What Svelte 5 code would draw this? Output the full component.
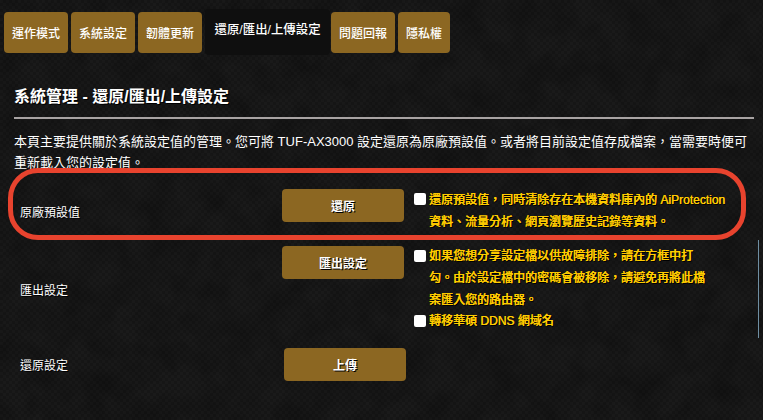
<script>
  const tabs = [
    { label: '運作模式' },
    { label: '系統設定' },
    { label: '韌體更新' },
    { label: '還原/匯出/上傳設定', active: true },
    { label: '問題回報' },
    { label: '隱私權' }
  ];
</script>

<div class="page">
  <svg class="grain" width="763" height="420" aria-hidden="true">
    <filter id="blotch">
      <feTurbulence type="fractalNoise" baseFrequency="0.035" numOctaves="4" seed="7" />
      <feColorMatrix values="0 0 0 0 0  0 0 0 0 0  0 0 0 0 0  1.6 0 0 0 -0.55" />
    </filter>
    <rect width="763" height="420" filter="url(#blotch)" />
  </svg>

  <nav class="tabs">
    {#each tabs as tab}
      <div class="tab" class:active={tab.active}>{tab.label}</div>
    {/each}
  </nav>

  <h1>系統管理 - 還原/匯出/上傳設定</h1>
  <div class="rule"></div>
  <p class="intro">本頁主要提供關於系統設定值的管理。您可將 TUF-AX3000 設定還原為原廠預設值。或者將目前設定值存成檔案，當需要時便可<br />重新載入您的設定值。</p>

  <section class="settings">
    <div class="row row-reset">
      <div class="label">原廠預設值</div>
      <button>還原</button>
      <div class="notes">
        <label><input type="checkbox" /><span>還原預設值，同時清除存在本機資料庫內的 AiProtection<br />資料、流量分析、網頁瀏覽歷史記錄等資料。</span></label>
      </div>
    </div>
    <div class="row row-export">
      <div class="label">匯出設定</div>
      <button>匯出設定</button>
      <div class="notes">
        <label><input type="checkbox" /><span>如果您想分享設定檔以供故障排除，請在方框中打<br />勾。由於設定檔中的密碼會被移除，請避免再將此檔<br />案匯入您的路由器。</span></label>
        <label class="ddns"><input type="checkbox" /><span>轉移華碩 DDNS 網域名</span></label>
      </div>
    </div>
    <div class="row row-upload">
      <div class="label">還原設定</div>
      <button class="upload">上傳</button>
    </div>
    <div class="highlight"></div>
  </section>
  <div class="edge"></div>
</div>

<style>
  :global(body) {
    margin: 0;
    background: #131313;
  }

  .page {
    position: relative;
    width: 763px;
    height: 420px;
    overflow: hidden;
    box-sizing: border-box;
    padding: 12px 0 0 4px;
    color: #fff;
    font-family: "Liberation Sans", "Noto Sans CJK TC", sans-serif;
    font-size: 12px;
    background:
      repeating-conic-gradient(rgba(0,0,0,0.1) 0 25%, rgba(255,255,255,0.006) 0 50%) 0 0 / 6px 6px,
      #181818;
  }

  .grain {
    position: absolute;
    left: 0;
    top: 0;
    opacity: 0.3;
    pointer-events: none;
  }

  .tabs, h1, .rule, .intro, .settings {
    position: relative;
  }

  .tabs {
    display: flex;
    gap: 3px;
    height: 41px;
    align-items: stretch;
  }

  .tab {
    display: flex;
    align-items: center;
    justify-content: center;
    padding: 0 8px;
    background: #8c6722;
    border-radius: 4px;
    font-weight: 500;
    white-space: nowrap;
  }

  .tab.active {
    box-sizing: border-box;
    width: 125px;
    margin: -3px -2px -2px 0;
    padding: 0 0 6px 0;
    background: #0f0f0f;
    font-size: 12.4px;
  }

  h1 {
    margin: 34px 0 0 10px;
    font-size: 16px;
    line-height: 20px;
    font-weight: 700;
    text-shadow: 1px 1px 0 #000;
  }

  .rule {
    height: 2px;
    margin: 10px 9px 0 10px;
    background: #a8a3a3;
  }

  .intro {
    margin: 12px 0 0 10px;
    font-size: 13px;
    line-height: 21px;
    white-space: nowrap;
  }

  .settings {
    margin-top: 4px;
  }

  .row {
    display: grid;
    grid-template-columns: 252px 122px 1fr;
    column-gap: 10px;
    box-sizing: border-box;
    padding: 12px 0 0 16px;
  }

  .row-reset {
    height: 57px;
  }

  .row-export {
    height: 102px;
    padding-bottom: 6px;
  }

  .label {
    align-self: center;
    text-shadow: 1px 1px 0 #000;
  }

  button {
    width: 122px;
    height: 33px;
    padding: 0;
    border: 0;
    border-radius: 4px;
    background: #8c6722;
    color: #fff;
    font: 700 12px "Liberation Sans", "Noto Sans CJK TC", sans-serif;
    text-shadow: 1px 1px 0 #000;
  }

  .upload {
    margin-left: 2px;
  }

  .notes {
    color: #ffcc00;
    font-weight: 500;
    line-height: 22px;
    text-shadow: 0.35px 0 0 #ffcc00, 1px 1px 0 #000;
  }

  .notes label {
    display: flex;
    align-items: flex-start;
    white-space: nowrap;
  }

  .row-export .notes {
    margin-top: -1px;
  }

  .notes .ddns {
    margin-top: -1px;
  }

  input {
    appearance: none;
    flex: none;
    box-sizing: border-box;
    width: 12px;
    height: 12px;
    margin: 4px 3px 0 0;
    background: #fff;
    border-radius: 2px;
  }

  .row-export input {
    margin-top: 5px;
  }

  /* red annotation ring drawn on top of the screenshot */
  .highlight {
    position: absolute;
    left: 4px;
    top: -9px;
    width: 738px;
    height: 72px;
    box-sizing: border-box;
    border: 5px solid #e8432e;
    border-radius: 30px;
    pointer-events: none;
  }

  .edge {
    position: absolute;
    left: 758px;
    top: 240px;
    width: 1px;
    height: 98px;
    background: #6f8fa3;
  }
</style>
